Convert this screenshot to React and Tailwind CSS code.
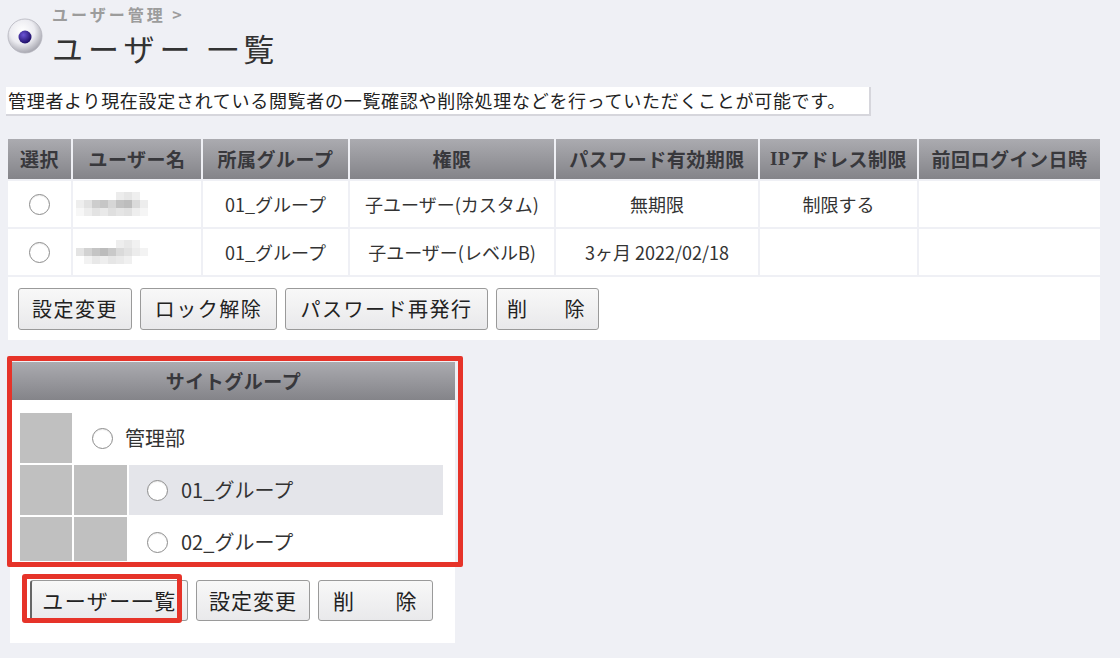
import { Fragment } from 'react'

const mosaicA = [
  ['bg-white', 'bg-white', 'bg-white', 'bg-white', 'bg-white', 'bg-[#ececec]', 'bg-[#e6e6e6]', 'bg-[#efefef]', 'bg-white'],
  ['bg-[#eeeeee]', 'bg-[#e2e2e2]', 'bg-[#cdcdcd]', 'bg-[#c6c6c6]', 'bg-[#d6d6d6]', 'bg-[#c2c2c2]', 'bg-[#bdbdbd]', 'bg-[#dadada]', 'bg-[#ededed]'],
  ['bg-[#f7f7f7]', 'bg-[#ededed]', 'bg-[#e3e3e3]', 'bg-[#e9e9e9]', 'bg-[#dfdfdf]', 'bg-[#e5e5e5]', 'bg-[#e1e1e1]', 'bg-[#eeeeee]', 'bg-[#f5f5f5]'],
]

const mosaicB = [
  ['bg-white', 'bg-white', 'bg-white', 'bg-white', 'bg-white', 'bg-[#eeeeee]', 'bg-[#e8e8e8]', 'bg-[#f1f1f1]', 'bg-white'],
  ['bg-[#e4e4e4]', 'bg-[#d2d2d2]', 'bg-[#c4c4c4]', 'bg-[#bcbcbc]', 'bg-[#c9c9c9]', 'bg-[#dadada]', 'bg-[#e2e2e2]', 'bg-[#ececec]', 'bg-[#f3f3f3]'],
  ['bg-white', 'bg-[#f2f2f2]', 'bg-[#e8e8e8]', 'bg-[#eeeeee]', 'bg-[#e6e6e6]', 'bg-[#eaeaea]', 'bg-[#f0f0f0]', 'bg-white', 'bg-white'],
]

const Mosaic = ({ tiles }) => (
  <div className="flex flex-col">
    {tiles.map((row, i) => (
      <div key={i} className="flex">
        {row.map((c, j) => (
          <div key={j} className={`w-[8px] h-[8px] ${c}`}></div>
        ))}
      </div>
    ))}
  </div>
)

const Radio = () => (
  <span className="inline-block w-[21px] h-[21px] rounded-full border border-[#8c8c8c] bg-white shadow-[inset_0_1px_1px_rgba(0,0,0,0.08)]"></span>
)

const Btn = ({ w, h = 'h-[42px]', children, className = '' }) => (
  <button
    className={`${w} ${h} flex items-center justify-center rounded-[3px] border border-[#9a9a9a] bg-linear-to-b from-[#f8f8f8] to-[#e9e9eb] text-[20px] tracking-[1.5px] text-[#222] ${className}`}
  >
    {children}
  </button>
)

const headers = ['選択', 'ユーザー名', '所属グループ', '権限', 'パスワード有効期限', null, '前回ログイン日時']

const users = [
  { tiles: mosaicA, group: '01_グループ', role: '子ユーザー(カスタム)', pw: '無期限', ip: '制限する' },
  { tiles: mosaicB, group: '01_グループ', role: '子ユーザー(レベルB)', pw: '3ヶ月 2022/02/18', ip: '' },
]

export default function App() {
  return (
    <div className="min-h-screen bg-[#eff0f5] font-['Noto_Sans_CJK_JP','Noto_Sans',sans-serif] text-[#333]">
      {/* title */}
      <div className="flex items-start pl-[7px] pt-[3px]">
        <svg className="mt-[15px]" width="36" height="36" viewBox="0 0 36 36">
          <defs>
            <radialGradient id="ball" cx="42%" cy="36%" r="66%">
              <stop offset="0" stopColor="#ffffff" />
              <stop offset="0.55" stopColor="#ececf1" />
              <stop offset="1" stopColor="#a4a4ad" />
            </radialGradient>
            <radialGradient id="dot" cx="38%" cy="34%" r="65%">
              <stop offset="0" stopColor="#6c55d6" />
              <stop offset="1" stopColor="#20106a" />
            </radialGradient>
          </defs>
          <circle cx="18" cy="18" r="17" fill="url(#ball)" stroke="#b4b4bc" strokeWidth="0.8" />
          <circle cx="18" cy="19" r="6.5" fill="url(#dot)" />
        </svg>
        <div className="ml-[9px]">
          <div className="text-[16px] leading-[22px] font-bold text-[#9c9c9c] tracking-[3px]">ユーザー管理 &gt;</div>
          <h1 className="mt-[1px] text-[31px] leading-[44px] text-[#333] tracking-[5px]">ユーザー 一覧</h1>
        </div>
      </div>

      {/* description */}
      <div className="mt-[17px] ml-[6px] w-[865px] h-[29px] bg-white border-r-2 border-b-2 border-[#d6d6dc] pl-[2px] text-[18px] leading-[27px] text-[#222] tracking-[0.7px]">
        管理者より現在設定されている閲覧者の一覧確認や削除処理などを行っていただくことが可能です。
      </div>

      {/* user table */}
      <div className="mt-[23px] ml-[8px] w-[1092px] grid grid-cols-[63px_128px_145px_204px_202px_157px_181px] gap-[2px]">
        {headers.map((h, i) => (
          <div
            key={i}
            className="h-[40px] flex items-center justify-center bg-linear-to-b from-[#ababb0] to-[#848489] text-[19px] font-bold tracking-[0.5px] text-[#38383c]"
          >
            {h === null ? (
              <>
                <span className="font-['Liberation_Serif',serif]">IP</span>アドレス制限
              </>
            ) : (
              h
            )}
          </div>
        ))}
        {users.map((u, i) => (
          <Fragment key={i}>
            <div className="h-[46px] bg-white flex items-center justify-center">
              <Radio />
            </div>
            <div className="h-[46px] bg-white flex items-center pl-[3px]">
              <Mosaic tiles={u.tiles} />
            </div>
            <div className="h-[46px] bg-white flex items-center justify-center text-[18px]">{u.group}</div>
            <div className="h-[46px] bg-white flex items-center justify-center text-[18px]">{u.role}</div>
            <div className="h-[46px] bg-white flex items-center justify-center text-[18px]">{u.pw}</div>
            <div className="h-[46px] bg-white flex items-center justify-center text-[18px]">{u.ip}</div>
            <div className="h-[46px] bg-white"></div>
          </Fragment>
        ))}
      </div>
      <div className="mt-[2px] ml-[8px] w-[1092px] bg-white pt-[11px] pb-[10px] pl-[10px] flex gap-[8px]">
        <Btn w="w-[114px]">設定変更</Btn>
        <Btn w="w-[137px]">ロック解除</Btn>
        <Btn w="w-[203px]">パスワード再発行</Btn>
        <Btn w="w-[103px]" className="!justify-start pl-[10px]">
          <span>削</span>
          <span className="ml-[36px]">除</span>
        </Btn>
      </div>

      {/* site group panel */}
      <div className="relative mt-[22px] ml-[10px] w-[445px] bg-white">
        <div className="ml-[2px] h-[38px] flex items-center justify-center bg-linear-to-b from-[#ababb0] to-[#848489] text-[19px] font-bold tracking-[0.5px] text-[#38383c]">
          サイトグループ
        </div>
        <div className="h-[161px] overflow-hidden pt-[13px] pl-[10px]">
          <div className="w-[423px] flex flex-col gap-[2px]">
            <div className="h-[50px] grid grid-cols-[52px_1fr] gap-[2px]">
              <div className="bg-[#c0c0c0]"></div>
              <div className="flex items-center pl-[18px] gap-[12px] text-[20px] text-[#333]">
                <Radio />
                <span>管理部</span>
              </div>
            </div>
            <div className="h-[50px] grid grid-cols-[52px_53px_1fr] gap-[2px]">
              <div className="bg-[#c0c0c0]"></div>
              <div className="bg-[#c0c0c0]"></div>
              <div className="bg-[#e4e5ea] flex items-center pl-[18px] gap-[13px] text-[20px] text-[#333]">
                <Radio />
                <span>01_グループ</span>
              </div>
            </div>
            <div className="h-[50px] grid grid-cols-[52px_53px_1fr] gap-[2px]">
              <div className="bg-[#c0c0c0]"></div>
              <div className="bg-[#c0c0c0]"></div>
              <div className="flex items-center pl-[18px] gap-[13px] text-[20px] text-[#333]">
                <Radio />
                <span>02_グループ</span>
              </div>
            </div>
          </div>
        </div>
        <div className="mt-[19px] pl-[20px] pb-[22px] flex gap-[8px]">
          <div className="relative">
            <Btn w="w-[158px]" h="h-[41px]" className="border-l-2 border-l-[#666] text-[21px]">ユーザー一覧</Btn>
            <div className="absolute left-[-8px] top-[-6px] w-[160px] h-[49px] border-[5px] border-[#e63329] rounded-[3px] pointer-events-none"></div>
          </div>
          <Btn w="w-[114px]" h="h-[41px]" className="text-[21px] !tracking-[1px]">設定変更</Btn>
          <Btn w="w-[115px]" h="h-[41px]" className="!justify-between px-[14px] text-[21px]">
            <span>削</span>
            <span>除</span>
          </Btn>
        </div>
        {/* annotation frame */}
        <div className="absolute left-[-3px] top-[-6px] w-[456px] h-[211px] border-[5px] border-[#e63329] rounded-[2px] pointer-events-none"></div>
      </div>
    </div>
  )
}
